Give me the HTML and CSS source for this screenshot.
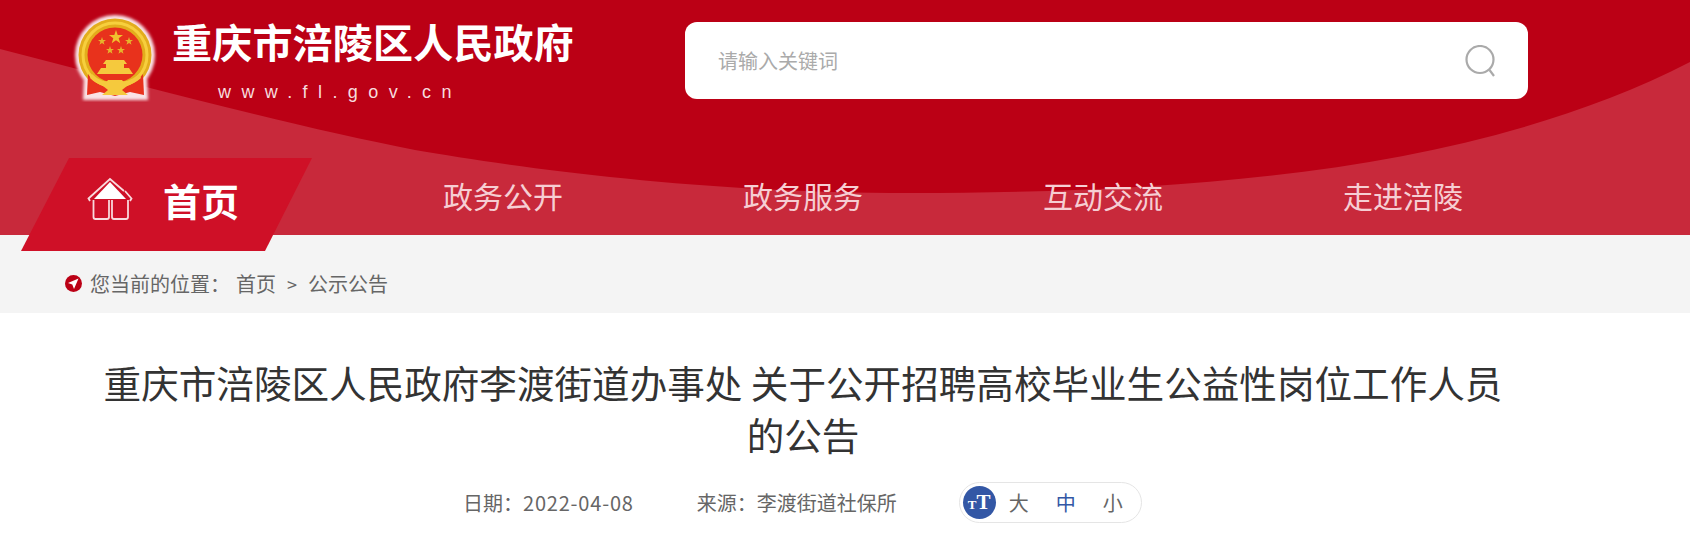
FILE: index.html
```html
<!DOCTYPE html>
<html lang="zh-CN">

<head>
    <meta charset="UTF-8">
    <meta name="viewport" content="width=device-width, initial-scale=1.0">
    <title>重庆市涪陵区人民政府</title>
    <link rel="stylesheet" href="styles.css">
</head>

<body>
    <div class="header">
        <svg class="wave" viewBox="0 0 1690 235" preserveAspectRatio="none">
            <path fill="#bb0015" d="M0 0H1690V62C1480 170 1200 193 910 193C700 193 520 168 415 150C300 128 150 88 0 49Z" />
        </svg>

        <div class="top">
            <svg class="emblem" viewBox="70 12 90 90">
                <defs>
                    <filter id="glow" x="-20%" y="-20%" width="140%" height="140%">
                        <feGaussianBlur stdDeviation="1.8" />
                    </filter>
                    <filter id="soft" x="-10%" y="-10%" width="120%" height="120%">
                        <feGaussianBlur stdDeviation="0.4" />
                    </filter>
                </defs>
                <g filter="url(#glow)" fill="#fae3e5">
                    <circle cx="115" cy="55" r="40" />
                    <path d="M84 76H147L148 100H83Z" />
                </g>
                <g filter="url(#soft)">
                    <circle cx="115" cy="55" r="36.5" fill="#e3ad1f" />
                    <circle cx="115" cy="55" r="32" fill="none" stroke="#f7cf3c" stroke-width="3" />
                    <circle cx="115" cy="55" r="27.5" fill="#e8301f" />
                    <path fill="#f0c22d" d="M116 30l1.7 5 5.3 0-4.3 3.2 1.6 5.1-4.3-3.1-4.3 3.1 1.6-5.1-4.3-3.2 5.3 0z" />
                    <path fill="#e6b52c" d="M102 37l1 3h3l-2.4 1.8.9 3-2.5-1.8-2.5 1.8.9-3-2.4-1.8h3z" />
                    <path fill="#e6b52c" d="M129 37l1 3h3l-2.4 1.8.9 3-2.5-1.8-2.5 1.8.9-3-2.4-1.8h3z" />
                    <path fill="#e6b52c" d="M110 46l1 3h3l-2.4 1.8.9 3-2.5-1.8-2.5 1.8.9-3-2.4-1.8h3z" />
                    <path fill="#e6b52c" d="M121 46l1 3h3l-2.4 1.8.9 3-2.5-1.8-2.5 1.8.9-3-2.4-1.8h3z" />
                    <path fill="#f5c93c" d="M106 60H124L127 64H124V68H129L133 74H97L101 68H106V64H103Z" />
                    <path fill="#e8301f" d="M88 74C94 84 104 88 115 88C126 88 136 84 143 74L144 95L130 92L115 96L100 92L87 95Z" />
                    <path fill="#f5c93c" d="M92 74C99 81 106 82 115 82C124 82 131 81 139 74L141 78C132 86 123 87 115 87C107 87 98 86 90 78Z" />
                    <path fill="#f5c93c" d="M108 80H122L127 86L122 90L128 95H102L108 90L103 86Z" />
                </g>
            </svg>
            <div class="site">
                <div class="site-name">重庆市涪陵区人民政府</div>
                <div class="site-url">www.fl.gov.cn</div>
            </div>
            <div class="search">
                <span class="search-text">请输入关键词</span>
                <svg class="search-icon" viewBox="0 0 32 32">
                    <circle cx="15" cy="14.5" r="13.5" fill="none" stroke="#aaaaaa" stroke-width="2.2" />
                    <path d="M24.5 25L29 31" fill="none" stroke="#aaaaaa" stroke-width="2.2" />
                </svg>
            </div>
        </div>

        <div class="nav">
            <a class="nav-home">
                <svg class="home-icon" viewBox="85 176 48 46">
                    <path fill="#ffffff" d="M109 181L93 198H125Z" />
                    <path fill="none" stroke="#f9d9dc" stroke-width="1.8" d="M89 200L87.5 197.5L109 178L123 190M124 190L130.5 197.5L129 200" />
                    <path fill="none" stroke="#f9d9dc" stroke-width="1.8" d="M92.5 199V216Q92.5 218 94.5 218H106Q108 218 108 216V199M111 199V216Q111 218 113 218H125Q127 218 127 216V199" />
                </svg>
                <span class="home-text">首页</span>
            </a>
            <a class="nav-item">政务公开</a>
            <a class="nav-item">政务服务</a>
            <a class="nav-item">互动交流</a>
            <a class="nav-item">走进涪陵</a>
        </div>
    </div>

    <div class="crumbs">
        <svg class="crumb-icon" viewBox="0 0 17 17">
            <circle cx="8.5" cy="8.5" r="8.5" fill="#bb0015" />
            <path fill="#ffffff" d="M13.5 3.5L3 8L7.3 9.4L9 14Z" />
        </svg>
        <span class="crumb-here">您当前的位置&#65306;</span>
        <a class="crumb-link">首页</a>
        <span class="crumb-sep">&gt;</span>
        <a class="crumb-link">公示公告</a>
    </div>

    <div class="article">
        <h1>重庆市涪陵区人民政府李渡街道办事处 关于公开招聘高校毕业生公益性岗位工作人员的公告</h1>
        <div class="meta">
            <span class="date">日期&#65306;<span class="date-num">2022-04-08</span></span>
            <span class="source">来源&#65306;李渡街道社保所</span>
            <div class="size">
                <span class="size-badge"><small>T</small>T</span>
                <a>大</a>
                <a class="active">中</a>
                <a>小</a>
            </div>
        </div>
    </div>
</body>

</html>
```

FILE: styles.css
```css
* {
    margin: 0;
    padding: 0;
    box-sizing: border-box;
}

body {
    background-color: #ffffff;
    font-family: "Noto Sans CJK SC", "Liberation Sans", sans-serif;
    overflow: hidden;
}

.header {
    position: relative;
    z-index: 1;
    height: 235px;
    background-color: #c8293b;
}

.wave {
    position: absolute;
    top: 0;
    left: 0;
    width: 100%;
    height: 100%;
}

.top {
    position: relative;
    display: flex;
    height: 158px;
    padding-left: 70px;
}

.emblem {
    width: 90px;
    height: 90px;
    margin-top: 12px;
}

.site {
    width: 401px;
    margin-left: 12px;
    color: #ffffff;
}

.site-name {
    margin-top: 12px;
    font-size: 40px;
    font-weight: bold;
    line-height: 58px;
    letter-spacing: 0.2px;
    white-space: nowrap;
}

.site-url {
    margin-top: 12px;
    padding-left: 46px;
    font-family: "Liberation Sans", sans-serif;
    font-size: 18px;
    line-height: 20px;
    letter-spacing: 10.4px;
    color: #f6dcdf;
}

.search {
    display: flex;
    justify-content: space-between;
    align-items: center;
    width: 843px;
    height: 77px;
    margin-top: 22px;
    margin-left: 112px;
    padding: 0 31px 0 33px;
    background-color: #ffffff;
    border-radius: 12px;
}

.search-text {
    font-size: 20px;
    color: #aaaaaa;
}

.search-icon {
    width: 32px;
    height: 32px;
}

.nav {
    position: relative;
    display: flex;
    padding-left: 21px;
}

.nav-home {
    display: flex;
    align-items: center;
    width: 291px;
    height: 93px;
    padding-left: 65px;
    background-color: #cf1027;
    clip-path: polygon(48px 0, 100% 0, 244px 100%, 0 100%);
}

.home-icon {
    width: 48px;
    height: 46px;
    margin-bottom: 10px;
}

.home-text {
    margin-left: 29px;
    margin-bottom: 10px;
    font-size: 38px;
    font-weight: bold;
    color: #ffffff;
}

.nav-item {
    width: 300px;
    height: 77px;
    font-size: 30px;
    line-height: 74px;
    text-align: center;
    color: #f6ced3;
}

.nav-item:nth-child(2) {
    margin-left: 41px;
}

.crumbs {
    display: flex;
    align-items: center;
    height: 78px;
    padding-top: 19px;
    padding-left: 65px;
    background-color: #f4f4f4;
    font-size: 20px;
    color: #666666;
}

.crumb-icon {
    width: 17px;
    height: 17px;
    margin-right: 8px;
}

.crumb-here {
    margin-right: 6px;
}

.crumb-sep {
    margin: 0 11px;
    font-size: 18px;
}

.article {
    width: 1420px;
    margin-left: 93px;
    padding-top: 43px;
}

h1 {
    font-size: 37.6px;
    font-weight: normal;
    line-height: 52px;
    text-align: center;
    color: #333333;
}

.meta {
    display: flex;
    align-items: center;
    margin-top: 22px;
    padding-left: 370px;
    font-size: 20px;
    color: #666666;
}

.date-num {
    letter-spacing: 0.8px;
}

.source {
    margin-left: 63px;
}

.size {
    display: flex;
    align-items: center;
    width: 183px;
    height: 41px;
    margin-left: 62px;
    padding-left: 3px;
    border: 1px solid #e5e5e5;
    border-radius: 21px;
}

.size-badge {
    flex-shrink: 0;
    width: 33px;
    height: 33px;
    margin-right: 13px;
    border-radius: 50%;
    background-color: #3357a5;
    font-family: "Liberation Serif", serif;
    font-size: 21px;
    font-weight: bold;
    line-height: 33px;
    text-align: center;
    color: #ffffff;
}

.size-badge small {
    font-size: 13px;
}

.size a {
    width: 20px;
    margin-right: 27px;
}

.size a:last-child {
    margin-right: 0;
}

.size a.active {
    color: #3357a5;
}
```
